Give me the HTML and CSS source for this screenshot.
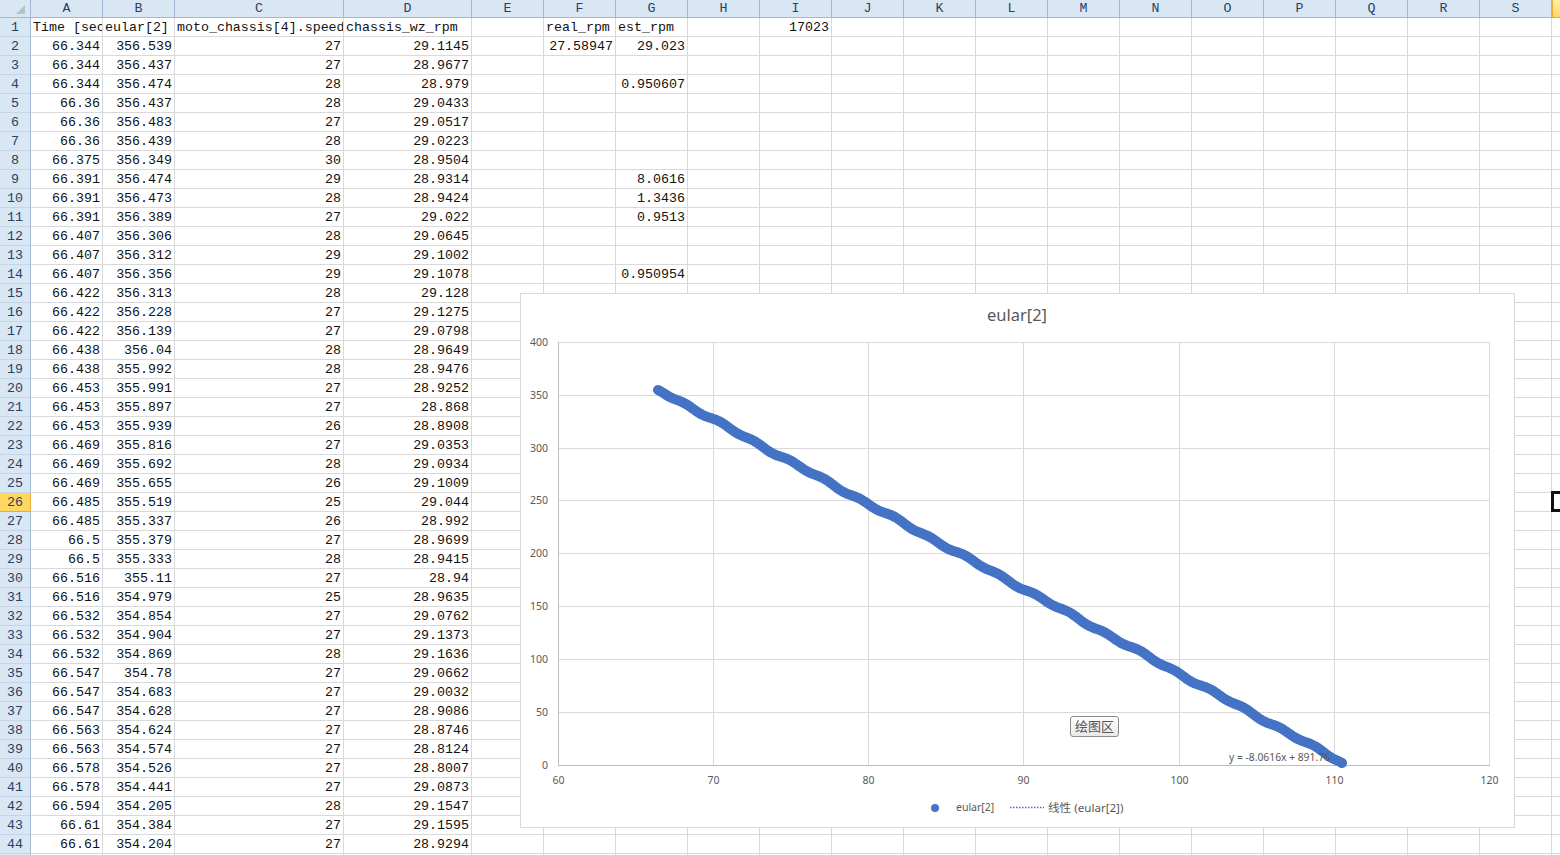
FILE: index.html
```html
<!DOCTYPE html>
<html lang="en">
<head>
  <meta charset="UTF-8">
  <title>eular[2] - Sheet1</title>
  <link rel="stylesheet" href="styles.css">
</head>
<body>

  <table class="sheet">
    <colgroup id="sheetCols"></colgroup>
    <thead id="sheetHead"></thead>
    <tbody id="sheetBody"></tbody>
  </table>

  <!-- chart floats over the cells, svg uses the same coordinates as the page -->
  <div class="chart">
    <svg class="chart-svg" viewBox="521 294 993 533" width="993" height="533">
      <g class="grid" id="gridLines"></g>
      <line class="axis" x1="558.5" y1="342" x2="558.5" y2="766"></line>
      <line class="axis" x1="558" y1="765.5" x2="1490" y2="765.5"></line>
      <g class="labels" id="axisLabels"></g>
      <polyline class="curve" id="curve" points=""></polyline>
      <text class="chart-title" x="1017" y="321" text-anchor="middle">eular[2]</text>
      <text class="trend-label" x="1229" y="761">y = -8.0616x + 891.76</text>
      <circle class="legend-dot" cx="935" cy="808" r="4"></circle>
      <text class="legend-text" x="956" y="811">eular[2]</text>
      <line class="legend-line" x1="1010" y1="807.5" x2="1044" y2="807.5"></line>
      <text class="legend-trend" x="1048" y="812">线性 (eular[2])</text>
    </svg>
    <div class="plot-tip">绘图区</div>
  </div>

  <script src="script.js"></script>
</body>
</html>
```

FILE: styles.css
```css
html, body {
  margin: 0;
  height: 855px;
  overflow: hidden;
  background-color: #fff;
}

.sheet {
  table-layout: fixed;
  width: 1624px;
  border-collapse: separate;
  border-spacing: 0;
  font-family: "Liberation Mono", monospace;
  font-size: 13.3px;
  color: #111;
}

.sheet th,
.sheet td {
  box-sizing: border-box;
  padding: 0 2px;
  overflow: hidden;
  white-space: nowrap;
  font-weight: normal;
  line-height: 17px;
}

.sheet td {
  height: 19px;
  border-right: 1px solid #d9d9d9;
  border-bottom: 1px solid #d9d9d9;
}

.sheet td.num {
  text-align: right;
}

.sheet thead th {
  height: 17px;
  padding: 0;
  text-align: center;
  color: #2b3f63;
  background-color: #d9e6f4;
  border-right: 1px solid #a3b8d4;
  border-bottom: 1px solid #a3b8d4;
}

.sheet tbody th {
  height: 19px;
  padding: 0;
  text-align: center;
  color: #2b3f63;
  background-color: #d9e6f4;
  border-right: 1px solid #a3b8d4;
  border-bottom: 1px solid #c6d5e6;
}

.sheet thead th.corner {
  position: relative;
}

.corner-mark {
  position: absolute;
  right: 5px;
  bottom: 3px;
  width: 9px;
  height: 9px;
  background-color: #b4c1cf;
  clip-path: polygon(100% 0, 100% 100%, 0 100%);
}

.sheet thead th.selected {
  background: linear-gradient(#fff0a0, #ffd75e);
  border-left: 1px solid #f0a93c;
  border-bottom: 1px solid #f0a93c;
}

.sheet tbody th.selected {
  background-color: #ffd75e;
  border-right: 1px solid #f0a93c;
  border-bottom: 1px solid #f0a93c;
}

.sheet td.active {
  position: relative;
  overflow: visible;
}

.sheet td.active::after {
  content: "";
  position: absolute;
  left: -1px;
  top: -2px;
  width: 72px;
  height: 21px;
  box-sizing: border-box;
  border: 3px solid #111;
}

.chart {
  position: absolute;
  left: 520px;
  top: 293px;
  width: 993px;
  height: 533px;
  background-color: #fff;
  border: 1px solid #d9d9d9;
}

.chart-svg {
  display: block;
  font-family: "Noto Sans", "Noto Sans CJK SC", sans-serif;
}

.grid line {
  stroke: #d9d9d9;
  stroke-width: 1;
}

.axis {
  stroke: #bfbfbf;
  stroke-width: 1;
}

.labels text {
  font-size: 10.5px;
  fill: #595959;
}

.curve {
  fill: none;
  stroke: #4472c4;
  stroke-width: 10;
  stroke-linecap: round;
  stroke-linejoin: round;
}

.chart-title {
  font-size: 16.5px;
  fill: #595959;
}

.trend-label {
  font-size: 10.3px;
  fill: #595959;
}

.legend-dot {
  fill: #4472c4;
}

.legend-text {
  font-size: 10.5px;
  fill: #595959;
}

.legend-trend {
  font-size: 11.6px;
  fill: #595959;
}

.legend-line {
  stroke: #4472c4;
  stroke-width: 1.5;
  stroke-dasharray: 1.5 1.5;
}

.plot-tip {
  position: absolute;
  left: 549px;
  top: 422px;
  width: 49px;
  height: 21px;
  box-sizing: border-box;
  text-align: center;
  font-family: "Noto Sans CJK SC", sans-serif;
  font-size: 13px;
  line-height: 17px;
  color: #555;
  background: linear-gradient(#fff, #e9e9e9);
  border: 1px solid #8c8c8c;
  border-radius: 3px;
}
```

FILE: script.js
```js
const columns = [
  ['A', 72], ['B', 72], ['C', 169], ['D', 128], ['E', 72], ['F', 72], ['G', 72],
  ['H', 72], ['I', 72], ['J', 72], ['K', 72], ['L', 72], ['M', 72], ['N', 72],
  ['O', 72], ['P', 72], ['Q', 72], ['R', 72], ['S', 72], ['T', 72]
];

const rows = [
  'Time [sec]|eular[2]|moto_chassis[4].speed|chassis_wz_rpm',
  '66.344|356.539|27|29.1145', '66.344|356.437|27|28.9677', '66.344|356.474|28|28.979',
  '66.36|356.437|28|29.0433', '66.36|356.483|27|29.0517', '66.36|356.439|28|29.0223',
  '66.375|356.349|30|28.9504', '66.391|356.474|29|28.9314', '66.391|356.473|28|28.9424',
  '66.391|356.389|27|29.022', '66.407|356.306|28|29.0645', '66.407|356.312|29|29.1002',
  '66.407|356.356|29|29.1078', '66.422|356.313|28|29.128', '66.422|356.228|27|29.1275',
  '66.422|356.139|27|29.0798', '66.438|356.04|28|28.9649', '66.438|355.992|28|28.9476',
  '66.453|355.991|27|28.9252', '66.453|355.897|27|28.868', '66.453|355.939|26|28.8908',
  '66.469|355.816|27|29.0353', '66.469|355.692|28|29.0934', '66.469|355.655|26|29.1009',
  '66.485|355.519|25|29.044', '66.485|355.337|26|28.992', '66.5|355.379|27|28.9699',
  '66.5|355.333|28|28.9415', '66.516|355.11|27|28.94', '66.516|354.979|25|28.9635',
  '66.532|354.854|27|29.0762', '66.532|354.904|27|29.1373', '66.532|354.869|28|29.1636',
  '66.547|354.78|27|29.0662', '66.547|354.683|27|29.0032', '66.547|354.628|27|28.9086',
  '66.563|354.624|27|28.8746', '66.563|354.574|27|28.8124', '66.578|354.526|27|28.8007',
  '66.578|354.441|27|29.0873', '66.594|354.205|28|29.1547', '66.61|354.384|27|29.1595',
  '66.61|354.204|27|28.9294', ''
];

// cells outside the four data columns, by row number and column index
const extras = {
  1: { 5: 'real_rpm', 6: 'est_rpm', 8: '17023' },
  2: { 5: '27.58947', 6: '29.023' },
  4: { 6: '0.950607' },
  9: { 6: '8.0616' },
  10: { 6: '1.3436' },
  11: { 6: '0.9513' },
  14: { 6: '0.950954' }
};

const activeRow = 26;
const activeCol = 19;

function renderSheet() {
  const cols = document.getElementById('sheetCols');
  const headRow = document.getElementById('sheetHead').insertRow();
  const body = document.getElementById('sheetBody');

  cols.innerHTML = '<col style="width: 31px">' +
    columns.map((c) => `<col style="width: ${c[1]}px">`).join('');

  headRow.innerHTML = '<th class="corner"><span class="corner-mark"></span></th>' +
    columns.map((c, i) => `<th class="${i === activeCol ? 'selected' : ''}">${c[0]}</th>`).join('');

  rows.forEach((text, r) => {
    const num = r + 1;
    const values = text.split('|');
    const extra = extras[num] || {};
    let html = `<th class="${num === activeRow ? 'selected' : ''}">${num}</th>`;
    columns.forEach((c, i) => {
      const value = extra[i] || values[i] || '';
      const classes = [];
      if (/^[\d.]+$/.test(value)) classes.push('num');
      if (num === activeRow && i === activeCol) classes.push('active');
      html += `<td class="${classes.join(' ')}">${value}</td>`;
    });
    body.insertRow().innerHTML = html;
  });
}

function renderChart() {
  const xTicks = [558, 713, 868, 1023, 1179, 1334, 1489];
  const yTicks = [342, 395, 448, 500, 553, 606, 659, 712, 765];
  let grid = '';
  let labels = '';

  xTicks.forEach((x, i) => {
    grid += `<line x1="${x + 0.5}" y1="342" x2="${x + 0.5}" y2="766"></line>`;
    labels += `<text x="${x + 0.5}" y="784" text-anchor="middle">${60 + i * 10}</text>`;
  });
  yTicks.forEach((y, i) => {
    grid += `<line x1="558" y1="${y + 0.5}" x2="1490" y2="${y + 0.5}"></line>`;
    labels += `<text x="548" y="${y + 3.5}" text-anchor="end">${400 - i * 50}</text>`;
  });
  document.getElementById('gridLines').innerHTML = grid;
  document.getElementById('axisLabels').innerHTML = labels;

  // the points nearly follow the trend line, with a small uneven ripple
  const points = [];
  for (let x = 658; x <= 1342; x += 2) {
    const trend = 390 + (x - 658) * 0.5453;
    const ripple = 1.1 * Math.sin((2 * Math.PI * (x - 676)) / 35 + Math.PI) +
      0.5 * Math.sin((2 * Math.PI * x) / 83);
    const fade = Math.min(1, (x - 658) / 12, (1342 - x) / 12);
    points.push(`${x},${(trend + (ripple - 0.6) * fade).toFixed(1)}`);
  }
  document.getElementById('curve').setAttribute('points', points.join(' '));
}

renderSheet();
renderChart();
```
